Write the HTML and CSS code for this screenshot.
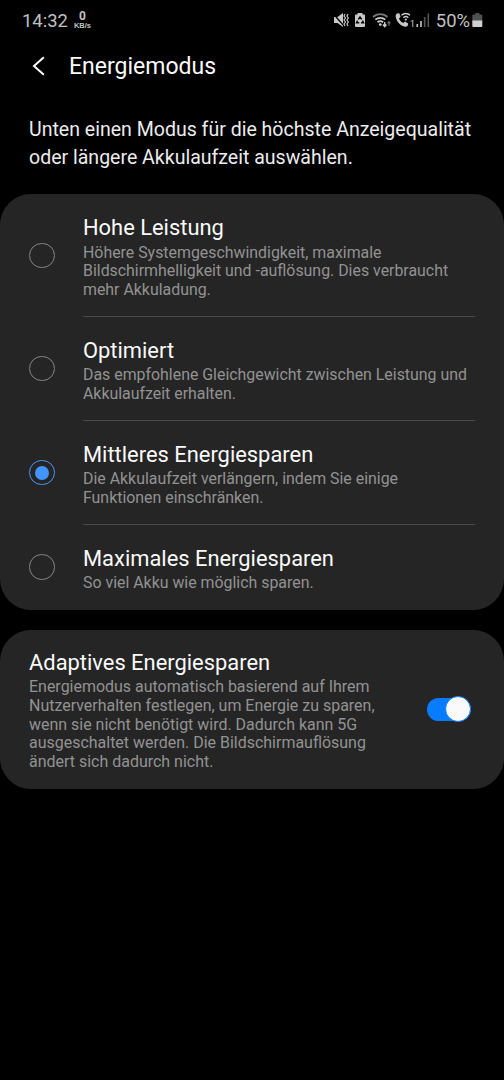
FILE: index.html
```html
<!DOCTYPE html>
<html lang="de">
<head>
  <meta charset="UTF-8" />
  <meta name="viewport" content="width=device-width, initial-scale=1.0"/>
  <title>Energiemodus</title>
  <link rel="stylesheet" href="styles.css">
</head>
<body>

<div class="statusbar">
  <span class="clock">14:32</span>
  <div class="speed"><b>0</b><span>KB/s</span></div>
  <div class="status-icons">
    <!-- mute + vibrate -->
    <svg class="mute" width="16" height="16" viewBox="0 0 16 16">
      <path d="M1 5h3.500L10 1v14l-5.500-4H1z" fill="#c8c8c8"/>
      <path d="M0 1.500L11 14" stroke="#000" stroke-width="1.200"/>
      <path d="M12 2l-1 2 1.500 2-1.500 2 1.500 2-1.500 2 1 2M15 2l-1 2 1.300 2-1.300 2 1.300 2-1.300 2 1 2" fill="none" stroke="#c8c8c8" stroke-width="1.200"/>
    </svg>
    <!-- battery recycle -->
    <svg class="saver" width="12" height="16" viewBox="0 0 12 16">
      <path d="M3.500 1h5v1.500H10a1 1 0 0 1 1 1V14a1 1 0 0 1-1 1H2a1 1 0 0 1-1-1V3.500a1 1 0 0 1 1-1h1.500z" fill="#c8c8c8"/>
      <path d="M4.300 7.400L6 5l1.700 2.400M8.500 8.600l1 2.200H7M5.200 10.800H2.500l1-2.200" fill="none" stroke="#000" stroke-width="1.400"/>
    </svg>
    <!-- wifi -->
    <svg class="wifi" width="20" height="16" viewBox="0 0 20 16">
      <g fill="none" stroke="#c8c8c8" stroke-width="1.800">
        <path d="M1 5a10.500 10.500 0 0 1 14.500 0" stroke="#777"/>
        <path d="M3.300 7.700a7.500 7.500 0 0 1 10 0"/>
        <path d="M5.500 10.200a4.500 4.500 0 0 1 5.600 0"/>
      </g>
      <circle cx="8.300" cy="12.600" r="1.400" fill="#c8c8c8"/>
      <path d="M12.700 10v4M11 12.500l1.700 2 1.700-2" fill="none" stroke="#c8c8c8" stroke-width="1.500"/>
      <path d="M17 14v-4M15.500 11.500l1.500-2 1.500 2" fill="none" stroke="#666" stroke-width="1.200"/>
    </svg>
    <!-- wifi call -->
    <svg class="call" width="17" height="16" viewBox="0 0 17 16">
      <path d="M2 1.500l2.300-.2 1.300 3.400L4 6.400c.8 2 2.200 3.600 4.300 4.700l1.800-1.500 3 1.800-.4 2.300c-.8 1-2 1.300-3.200.9C4.800 13.200 1.700 9.700.7 4.700.5 3.300 1 2.200 2 1.500z" fill="#c8c8c8"/>
      <path d="M6.500 3.300a6 6 0 0 1 8.600 0M8.300 5.700a3.600 3.600 0 0 1 5 0" fill="none" stroke="#c8c8c8" stroke-width="1.400"/>
      <circle cx="10.800" cy="7.600" r="1.100" fill="#c8c8c8"/>
    </svg>
    <span class="sim">1</span>
    <!-- signal -->
    <svg class="signal" width="14" height="16" viewBox="0 0 14 16">
      <path d="M1.300 12v3M5 9v6" stroke="#c8c8c8" stroke-width="1.600"/>
      <path d="M8.700 5v10M12.300 1.500v13.500" stroke="#555" stroke-width="1.600"/>
    </svg>
    <span class="percent">50%</span>
    <svg class="battery" width="11" height="16" viewBox="0 0 11 16">
      <path d="M3.300 1h4v1.500h2a1 1 0 0 1 1 1V9H.3V3.500a1 1 0 0 1 1-1h2z" fill="#505050"/>
      <path d="M.3 8.500h10V14a1 1 0 0 1-1 1h-8a1 1 0 0 1-1-1z" fill="#d0d0d0"/>
    </svg>
  </div>
</div>

<div class="header">
  <svg width="14" height="20" viewBox="0 0 14 20">
    <path d="M11.800 1.200L2 10l9.800 8.800" fill="none" stroke="#fff" stroke-width="2"/>
  </svg>
  <h1>Energiemodus</h1>
</div>

<p class="intro">Unten einen Modus für die höchste Anzeigequalität<br>oder längere Akkulaufzeit auswählen.</p>

<div class="card modes">
  <div class="mode">
    <span class="radio"></span>
    <div class="mode-text">
      <h2>Hohe Leistung</h2>
      <p>Höhere Systemgeschwindigkeit, maximale<br>Bildschirmhelligkeit und -auflösung. Dies verbraucht<br>mehr Akkuladung.</p>
    </div>
  </div>
  <div class="mode">
    <span class="radio"></span>
    <div class="mode-text">
      <h2>Optimiert</h2>
      <p>Das empfohlene Gleichgewicht zwischen Leistung und<br>Akkulaufzeit erhalten.</p>
    </div>
  </div>
  <div class="mode">
    <span class="radio checked"></span>
    <div class="mode-text">
      <h2>Mittleres Energiesparen</h2>
      <p>Die Akkulaufzeit verlängern, indem Sie einige<br>Funktionen einschränken.</p>
    </div>
  </div>
  <div class="mode">
    <span class="radio"></span>
    <div class="mode-text">
      <h2>Maximales Energiesparen</h2>
      <p>So viel Akku wie möglich sparen.</p>
    </div>
  </div>
</div>

<div class="card adaptive">
  <div class="adaptive-text">
    <h2>Adaptives Energiesparen</h2>
    <p>Energiemodus automatisch basierend auf Ihrem<br>Nutzerverhalten festlegen, um Energie zu sparen,<br>wenn sie nicht benötigt wird. Dadurch kann 5G<br>ausgeschaltet werden. Die Bildschirmauflösung<br>ändert sich dadurch nicht.</p>
  </div>
  <div class="switch"><span class="knob"></span></div>
</div>

</body>
</html>
```

FILE: styles.css
```css
* {
  box-sizing: border-box;
}

body {
  margin: 0;
  height: 1080px;
  background: #000;
  color: #fafafa;
  font-family: Roboto, sans-serif;
  overflow: hidden;
}

h1, h2, p {
  margin: 0;
  font-weight: 400;
  white-space: nowrap;
}

.statusbar {
  display: flex;
  align-items: center;
  height: 40px;
  padding: 0 21px 0 22px;
  color: #c0c0c0;
}

.clock {
  width: 51px;
  font-size: 18.4px;
}

.speed {
  display: flex;
  flex-direction: column;
  align-items: center;
  width: 19px;
  font-size: 12px;
  line-height: 12px;
}

.speed span {
  font-family: "Liberation Sans", sans-serif;
  font-size: 7.500px;
  font-weight: bold;
  line-height: 8px;
}

.status-icons {
  display: flex;
  align-items: center;
  margin-left: auto;
}

.mute {
  margin-right: -1px;
}

.saver {
  margin-left: 6px;
}

.wifi {
  margin-left: 6px;
}

.call {
  margin-left: 3px;
}

.sim {
  width: 4px;
  margin: 6px 1px 0 -2px;
  font-size: 9.5px;
}

.signal {
  margin-left: 1px;
}

.percent {
  margin: 0 2px 0 6px;
  font-size: 18.4px;
}

.header {
  display: flex;
  align-items: center;
  height: 52px;
  padding-left: 32px;
}

.header h1 {
  margin-left: 23px;
  padding-top: 1px;
  font-size: 23px;
}

.intro {
  padding: 24px 29px 22px;
  color: #ececec;
  font-size: 19.55px;
  line-height: 28px;
}

.card {
  background: #252525;
  border-radius: 31px;
}

.modes {
  height: 416px;
  margin-bottom: 19.5px;
}

.mode {
  display: flex;
  align-items: center;
  padding: 0 29px 0 29px;
}

.mode-text {
  flex: 1;
  margin-left: 28px;
  padding: 19px 0 16px;
  border-bottom: 1px solid #484848;
}

.mode:last-child .mode-text {
  border-bottom: none;
}

h2 {
  font-size: 21.9px;
  line-height: 30px;
}

.card p {
  padding-top: 0.7px;
  color: #929292;
  font-size: 15.9px;
  line-height: 18.65px;
}

.radio {
  display: flex;
  align-items: center;
  justify-content: center;
  width: 25.500px;
  height: 25.500px;
  margin-right: 0.5px;
  border: 1.500px solid #858585;
  border-radius: 50%;
}

.radio.checked {
  border-color: #4d94f8;
}

.radio.checked::after {
  content: "";
  width: 14px;
  height: 14px;
  border-radius: 50%;
  background: #4294ff;
}

.adaptive {
  display: flex;
  align-items: center;
  justify-content: space-between;
  height: 159.5px;
  padding: 0 33px 0 29px;
}

.adaptive-text {
  padding-top: 1px;
}

.adaptive p {
  font-size: 15.97px;
}

.switch {
  display: flex;
  align-items: center;
  justify-content: flex-end;
  width: 44.5px;
  height: 23px;
  border-radius: 12px;
  background: #087cff;
}

.knob {
  flex: none;
  width: 26px;
  height: 26px;
  border: 1px solid #087cff;
  border-radius: 50%;
  background: #fafafa;
}
```
